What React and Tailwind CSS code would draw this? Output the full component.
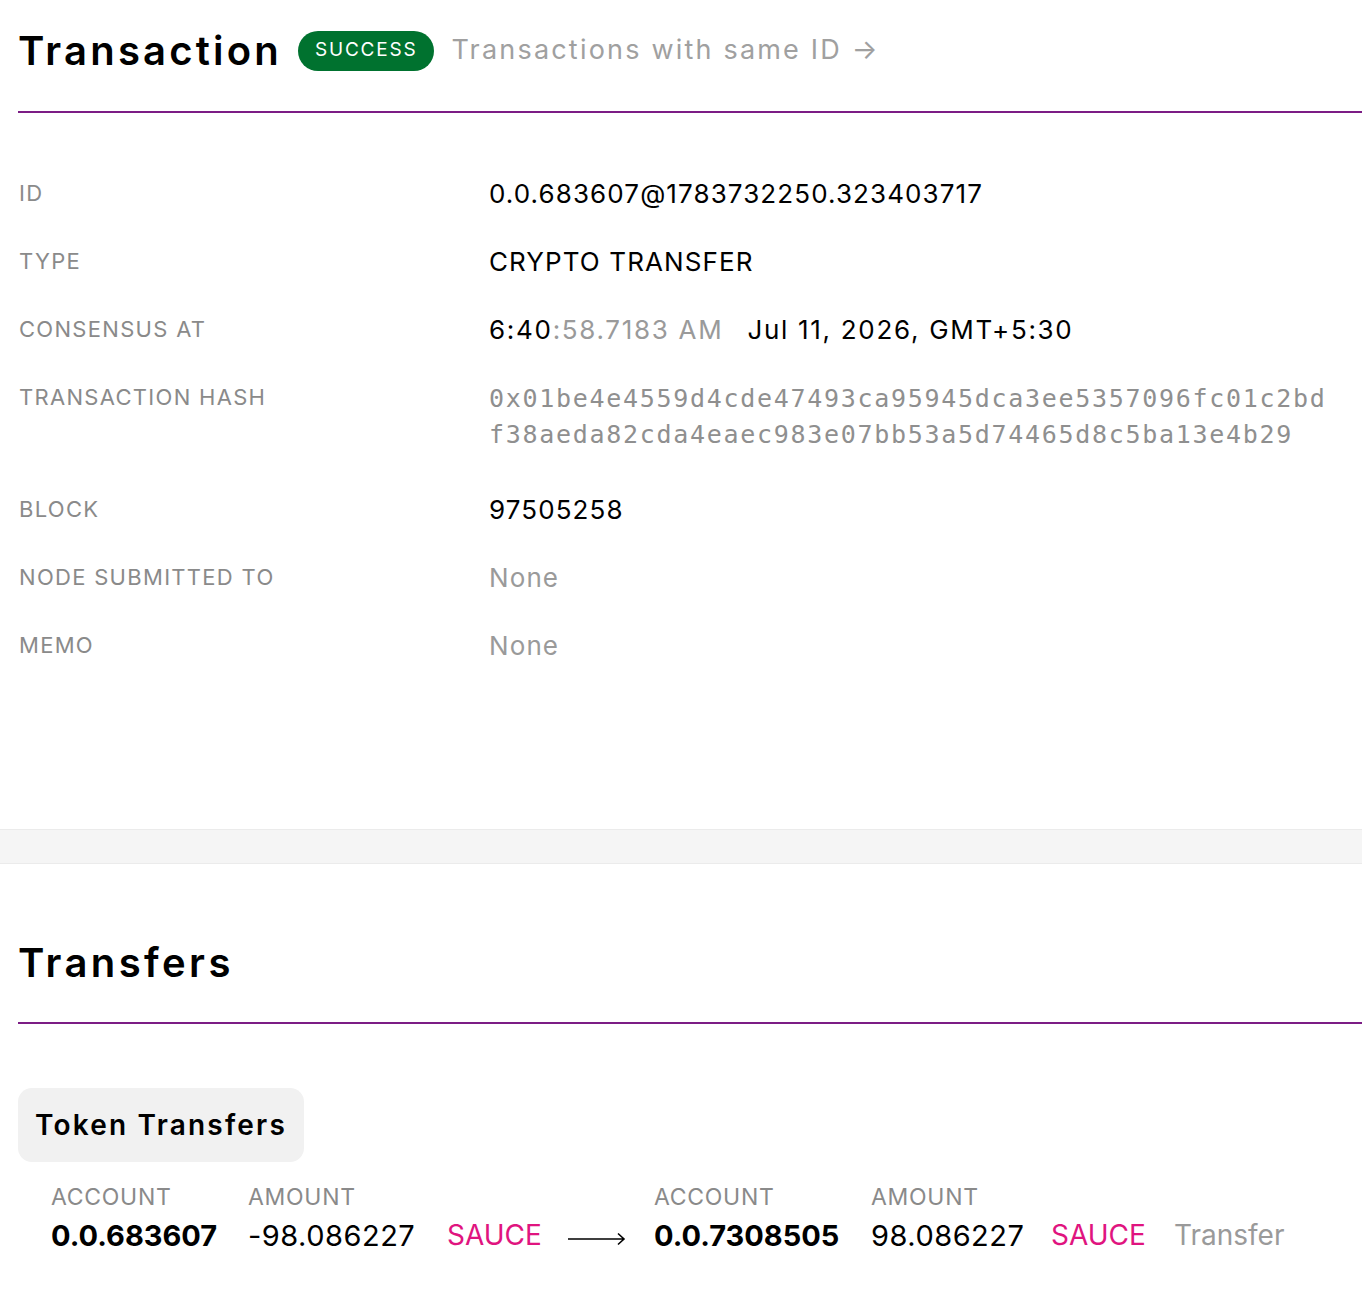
export default function App() {
  const head = { fontFamily: "Inter, 'Open Sans', sans-serif" };
  const body = { fontFamily: "Inter, Roboto, 'Liberation Sans', sans-serif" };
  const mono = { fontFamily: "'DejaVu Sans Mono', 'Liberation Mono', monospace" };
  const rows = [
    ["ID", <span className="text-black">0.0.683607@1783732250.323403717</span>],
    ["TYPE", <span className="text-black">CRYPTO TRANSFER</span>],
    [
      "CONSENSUS AT",
      <span className="text-black tracking-[1.7px]">
        6:40<span className="text-[#9a9a9a]">:58.7183 AM</span>
        <span className="ml-[24px]">Jul 11, 2026, GMT+5:30</span>
      </span>,
    ],
  ];
  const rows2 = [
    ["BLOCK", <span className="text-black">97505258</span>],
    ["NODE SUBMITTED TO", <span className="text-[#9a9a9a]">None</span>],
    ["MEMO", <span className="text-[#9a9a9a]">None</span>],
  ];
  const Label = ({ children }) => (
    <div className="w-[471px] pl-[1px] text-[22px] tracking-[1.3px] text-[#8a8a8a] leading-none pt-[22px]">{children}</div>
  );
  const Row = ({ label, value }) => (
    <div className="flex h-[68px]">
      <Label>{label}</Label>
      <div className="text-[26px] tracking-[1.1px] leading-none pt-[21px]">{value}</div>
    </div>
  );
  return (
    <div className="w-[1362px] h-[1310px] bg-white overflow-hidden" style={body}>
      <div className="pl-[18px]">
        <div className="flex items-center h-[111px] pb-[10px]">
          <h1 className="text-[40px] font-semibold text-black leading-none tracking-[3.2px]" style={head}>Transaction</h1>
          <span className="ml-[16px] h-[40px] px-[17px] rounded-full bg-[#00722f] text-white text-[19px] flex items-center tracking-[1.8px]" style={head}>SUCCESS</span>
          <span className="ml-[17px] text-[27px] text-[#a0a0a0] tracking-[2.2px]" style={head}>Transactions with same ID →</span>
        </div>
        <div className="h-[2px] bg-[#7c1d85]"></div>
        <div className="pt-[47px]">
          {rows.map(([l, v]) => (
            <Row key={l} label={l} value={v} />
          ))}
          <div className="flex h-[112px]">
            <Label>TRANSACTION HASH</Label>
            <div className="text-[25px] text-[#8f8f8f] leading-[36px] pt-[17px] tracking-[1.7px]" style={mono}>
              <div>0x01be4e4559d4cde47493ca95945dca3ee5357096fc01c2bd</div>
              <div>f38aeda82cda4eaec983e07bb53a5d74465d8c5ba13e4b29</div>
            </div>
          </div>
          {rows2.map(([l, v]) => (
            <Row key={l} label={l} value={v} />
          ))}
        </div>
      </div>
      <div className="mt-[149px] h-[35px] bg-[#f5f5f5] border-y border-[#ebebeb]"></div>
      <div className="pl-[18px]">
        <div className="flex items-center h-[158px] pt-[40px]">
          <h2 className="text-[40px] font-semibold text-black leading-none tracking-[3.4px]" style={head}>Transfers</h2>
        </div>
        <div className="h-[2px] bg-[#7c1d85]"></div>
        <div className="mt-[64px] inline-flex items-center h-[74px] px-[17px] rounded-[14px] bg-[#f1f1f1]">
          <span className="text-[28px] font-semibold text-black tracking-[2.2px]" style={head}>Token Transfers</span>
        </div>
        <div className="flex items-end mt-[24px] pl-[33px]">
          <div className="w-[197px]">
            <div className="text-[23px] tracking-[0.7px] text-[#8a8a8a] leading-none">ACCOUNT</div>
            <div className="text-[29px] font-bold text-black leading-none mt-[12px]">0.0.683607</div>
          </div>
          <div className="w-[320px] flex flex-col">
            <div className="text-[23px] tracking-[0.7px] text-[#8a8a8a] leading-none">AMOUNT</div>
            <div className="flex mt-[12px] text-[29px] leading-none">
              <span className="w-[199px] text-black tracking-[0.5px]">-98.086227</span>
              <span className="text-[#e0147f] text-[28px]">SAUCE</span>
            </div>
          </div>
          <div className="w-[86px] flex items-center h-[29px]">
            <svg width="58" height="14" viewBox="0 0 58 14" className="mt-[6px]">
              <path d="M0 7 H56 M50 1.5 L56 7 L50 12.5" stroke="black" strokeWidth="1.6" fill="none" />
            </svg>
          </div>
          <div className="w-[217px]">
            <div className="text-[23px] tracking-[0.7px] text-[#8a8a8a] leading-none">ACCOUNT</div>
            <div className="text-[29px] font-bold text-black leading-none mt-[12px]">0.0.7308505</div>
          </div>
          <div className="flex flex-col">
            <div className="text-[23px] tracking-[0.7px] text-[#8a8a8a] leading-none">AMOUNT</div>
            <div className="flex mt-[12px] text-[29px] leading-none">
              <span className="w-[180px] text-black tracking-[0.5px]">98.086227</span>
              <span className="w-[123px] text-[#e0147f] text-[28px]">SAUCE</span>
              <span className="text-[#9a9a9a] text-[28px]">Transfer</span>
            </div>
          </div>
        </div>
      </div>
    </div>
  );
}
